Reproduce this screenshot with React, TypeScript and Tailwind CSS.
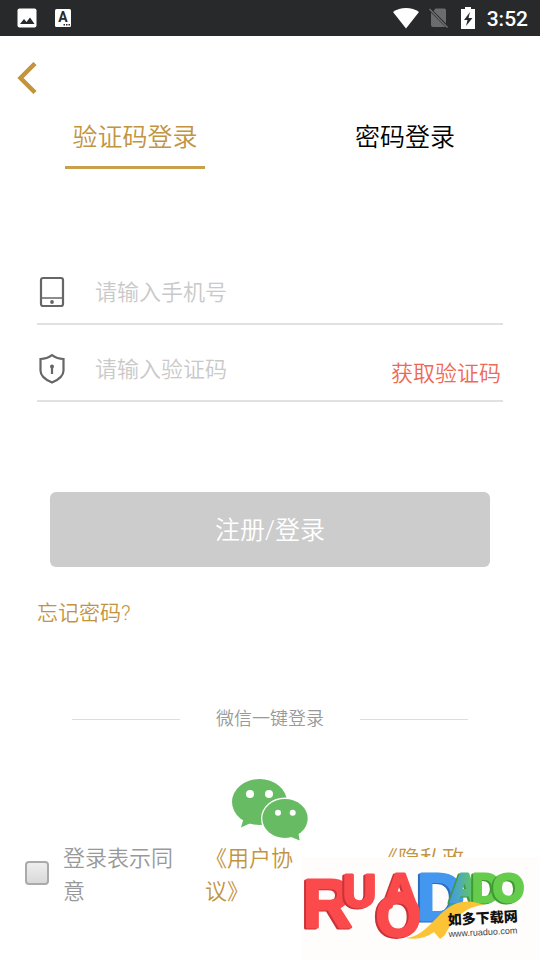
import { useState } from "react";

const PictureIcon = () => (
  <svg viewBox="0 0 20 20" className="size-5" aria-hidden="true">
    <rect width="19" height="19" x="0.5" y="0.5" rx="2" fill="#fff" />
    <path d="M3 16l4-5 2.500 3L13 9.500l4.500 6.500z" fill="#28292b" />
  </svg>
);

const KeyboardIcon = () => (
  <svg viewBox="0 0 16 18" className="w-4 h-[18px]" aria-hidden="true">
    <rect width="16" height="18" rx="1.500" fill="#fff" />
    <text
      x="8"
      y="13"
      textAnchor="middle"
      fontSize="14"
      fontWeight="700"
      fontFamily="Roboto, sans-serif"
      fill="#28292b"
    >
      A
    </text>
    <path d="M8.500 15h1.500v1.500H8.500zM11 15h1.500v1.500H11zM13.500 15H15v1.500h-1.500z" fill="#28292b" />
  </svg>
);

const WifiIcon = () => (
  <svg viewBox="0 0 26 21" className="w-[26px] h-[21px]" aria-hidden="true">
    <path d="M13 20.500L0 4C7-1.300 19-1.300 26 4z" fill="#fff" />
  </svg>
);

const NoSimIcon = () => (
  <svg viewBox="0 0 20 20" className="size-5" aria-hidden="true">
    <path d="M6.500 0.500H15.500Q17 0.500 17 2V15.500L4.500 3z" fill="#6b6c6e" />
    <path d="M2 4.500L16.500 19H4Q2 19 2 17z" fill="#6b6c6e" />
    <path d="M0.500 1L18.500 19.500" stroke="#6b6c6e" strokeWidth="1.500" />
  </svg>
);

const BatteryIcon = () => (
  <svg viewBox="0 0 14 22" className="w-3.5 h-[22px]" aria-hidden="true">
    <path d="M4 0h6v2h4v20H0V2h4z" fill="#fff" />
    <path d="M9 5L3 13h3.500l-1.500 6L11.500 11H7.500z" fill="#28292b" />
  </svg>
);

const BackIcon = () => (
  <svg viewBox="0 0 20 32" className="w-5 h-8" aria-hidden="true">
    <path d="M18 1.500L3.500 16L18 30.500" fill="none" stroke="#c2943f" strokeWidth="4.500" />
  </svg>
);

const PhoneIcon = () => (
  <svg viewBox="0 0 26 32" className="w-[26px] h-8" fill="none" stroke="#666" strokeWidth="2.200" aria-hidden="true">
    <rect x="2" y="2" width="22" height="28" rx="2" />
    <path d="M2 22h22" strokeWidth="1.500" />
    <circle cx="13" cy="26" r="1.900" fill="#666" stroke="none" />
  </svg>
);

const ShieldIcon = () => (
  <svg viewBox="0 0 26 32" className="w-[26px] h-8" fill="none" stroke="#666" strokeWidth="2.200" aria-hidden="true">
    <path d="M13 2.200Q8 6 1.500 6V17.500C1.500 23 7 27 13 29.500C19 27 24.500 23 24.500 17.500V6Q18 6 13 2.200z" />
    <circle cx="13" cy="13.500" r="2" fill="#666" stroke="none" />
    <path d="M13 13v8" />
  </svg>
);

const WechatIcon = () => (
  <svg viewBox="0 0 76 62" className="w-[76px] h-[62px]" aria-hidden="true">
    <g fill="#67bb63">
      <ellipse cx="27.500" cy="23" rx="27.500" ry="23" />
      <path d="M12 38L9 48.500L21 43z" />
    </g>
    <ellipse cx="53" cy="39.500" rx="24" ry="21" fill="#fff" />
    <g fill="#67bb63">
      <ellipse cx="53" cy="39.500" rx="22.700" ry="19.500" />
      <path d="M58 57.500L67.700 61.500L66 52z" />
    </g>
    <g fill="#fff">
      <circle cx="18" cy="15" r="4" />
      <circle cx="37" cy="15" r="4" />
      <circle cx="46" cy="33.700" r="3" />
      <circle cx="60.700" cy="33.700" r="3" />
    </g>
  </svg>
);

const narrow = "Liberation Sans Narrow, Liberation Sans, sans-serif";
const wide = "Liberation Sans, sans-serif";
const red = "[filter:drop-shadow(-2px_1px_0_#c93238)]";
const blue = "[filter:drop-shadow(-2px_1px_0_#2a6cc0)]";
const green = "[filter:drop-shadow(-2px_1px_0_#3f9a33)]";

const letters = [
  { char: "R", x: 1, y: 70, size: 68, font: narrow, face: "#fb4a4c", shade: red },
  { char: "U", x: 41, y: 50, size: 46, font: wide, face: "#fb4a4c", shade: red },
  { char: "D", x: 115, y: 63, size: 66, font: narrow, face: "#4497ee", shade: blue },
  { char: "A", x: 81, y: 50, size: 48, font: narrow, face: "#fb4a4c", shade: red },
  { char: "O", x: 74, y: 79, size: 58, font: wide, face: "#fb4a4c", shade: red },
  { char: "A", x: 148, y: 45, size: 40, font: narrow, face: "url(#sea)", shade: green },
  { char: "D", x: 170, y: 45, size: 40, font: narrow, face: "#66cc4c", shade: green },
  { char: "O", x: 191, y: 45, size: 40, font: narrow, face: "#66cc4c", shade: green },
];

const SiteLogo = () => (
  <svg viewBox="0 0 238 103" className="w-[238px] h-[103px]" role="img" aria-label="如多下载网">
    <defs>
      <linearGradient id="sea">
        <stop offset="0" stopColor="#4497ee" />
        <stop offset="0.8" stopColor="#5fc860" />
      </linearGradient>
    </defs>
    <g fontWeight="700" strokeWidth="3" strokeLinejoin="round">
      {letters.map(({ char, x, y, size, font, face, shade }, i) => (
        <text key={i} x={x} y={y} fontSize={size} fontFamily={font} fill={face} stroke={face} className={shade}>
          {char}
        </text>
      ))}
    </g>
    <path d="M104 81C128 79 136 49 160 45Q170 43 182 48C164 49 152 61 143 78L138 82L132 75Q120 84 104 81z" fill="#fcc337" />
    <g transform="rotate(-3 146 68)">
      <text x="146" y="68" fontSize="14" fontWeight="900" fontFamily="Noto Sans CJK SC, sans-serif" fill="#111">
        如多下载网
      </text>
      <text x="146" y="80" fontSize="9" fontFamily="Liberation Sans, sans-serif" fill="#444">
        www.ruaduo.com
      </text>
    </g>
  </svg>
);

const StatusBar = () => (
  <div className="flex h-9 items-center bg-[#28292b] pl-[17px] pr-3 text-white">
    <PictureIcon />
    <div className="ml-[18px]">
      <KeyboardIcon />
    </div>
    <div className="ml-auto flex items-center">
      <WifiIcon />
      <div className="ml-2.5">
        <NoSimIcon />
      </div>
      <div className="ml-3">
        <BatteryIcon />
      </div>
      <span className="ml-3 pt-0.5 text-[21px] leading-7 font-medium">3:52</span>
    </div>
  </div>
);

const Tab = ({
  label,
  active,
  onClick,
}: {
  label: string;
  active: boolean;
  onClick: () => void;
}) => (
  <button type="button" role="tab" aria-selected={active} onClick={onClick} className="flex justify-center">
    <span
      className={
        active
          ? "h-[50px] w-[140px] border-b-3 border-[#c9a04d] text-[25px] leading-[38px] text-[#c2943f]"
          : "h-[50px] w-[140px] text-[25px] leading-[38px] text-black"
      }
    >
      {label}
    </span>
  </button>
);

const Field = ({
  id,
  label,
  placeholder,
  icon,
  children,
}: {
  id: string;
  label: string;
  placeholder: string;
  icon: React.ReactNode;
  children?: React.ReactNode;
}) => (
  <div className="flex h-[77px] items-center border-b-2 border-[#e1e1e1] pt-3">
    <label htmlFor={id} aria-label={label} className="ml-0.5 shrink-0">
      {icon}
    </label>
    <input
      id={id}
      placeholder={placeholder}
      className="ml-[30px] min-w-0 flex-1 pt-0.5 text-[22px] leading-8 text-[#333] outline-none placeholder:text-[#c9c9c9]"
    />
    {children}
  </div>
);

export default function App() {
  const [tab, setTab] = useState("code");
  const [agreed, setAgreed] = useState(false);

  return (
    <div className="relative min-h-screen overflow-hidden bg-white font-[Roboto,'Noto_Sans_CJK_SC',sans-serif] font-[350]">
      <StatusBar />
      <header className="h-[83px] pl-[17px] pt-[26px]">
        <button type="button" aria-label="返回" className="block">
          <BackIcon />
        </button>
      </header>

      <div role="tablist" className="grid grid-cols-2">
        <Tab label="验证码登录" active={tab === "code"} onClick={() => setTab("code")} />
        <Tab label="密码登录" active={tab === "password"} onClick={() => setTab("password")} />
      </div>

      <form className="mt-[79px]" onSubmit={(e) => e.preventDefault()}>
        <div className="mx-[37px]">
          <Field id="phone" label="手机号" placeholder="请输入手机号" icon={<PhoneIcon />} />
          <Field id="code" label="验证码" placeholder="请输入验证码" icon={<ShieldIcon />}>
            <button type="button" className="mt-2 mr-0.5 shrink-0 pt-0.5 text-[22px] leading-8 text-[#ee6a56]">
              获取验证码
            </button>
          </Field>
        </div>
        <div className="mt-[90px] px-[50px]">
          <button type="submit" className="h-[75px] w-full rounded-md bg-[#ccc] pt-0.5 text-[25px] text-white">
            注册/登录
          </button>
        </div>
      </form>

      <a href="#forgot" className="mt-[31px] ml-[37px] block w-fit text-[21px] leading-[30px] text-[#c2943f]">
        忘记密码?
      </a>

      <div className="mt-[77px] flex items-center gap-9 px-[72px] text-lg leading-7 text-[#999]">
        <div className="h-px flex-1 bg-[#ddd]" />
        微信一键登录
        <div className="h-px flex-1 bg-[#ddd]" />
      </div>
      <button type="button" aria-label="微信登录" className="mx-auto mt-[46px] block">
        <WechatIcon />
      </button>

      <div className="mt-px grid grid-cols-[38px_142fr_171fr_164fr] pl-[25px] text-[22px] leading-[33px] text-[#c2943f]">
        <input
          id="agree"
          type="checkbox"
          checked={agreed}
          onChange={(e) => setAgreed(e.target.checked)}
          className="mt-[19px] size-6 appearance-none rounded-sm border-2 border-[#aaa] bg-linear-to-b from-[#eee] to-[#d9d9d9] checked:from-[#c2943f] checked:to-[#c2943f]"
        />
        <label htmlFor="agree" className="pr-6 text-[#999]">
          登录表示同意
        </label>
        <a href="#terms" className="pr-[70px]">
          《用户协议》
        </a>
        <a href="#privacy" className="pr-[70px]">
          《隐私政策》
        </a>
      </div>

      <div className="absolute right-0 bottom-0 bg-[#fefdfc]">
        <SiteLogo />
      </div>
    </div>
  );
}
